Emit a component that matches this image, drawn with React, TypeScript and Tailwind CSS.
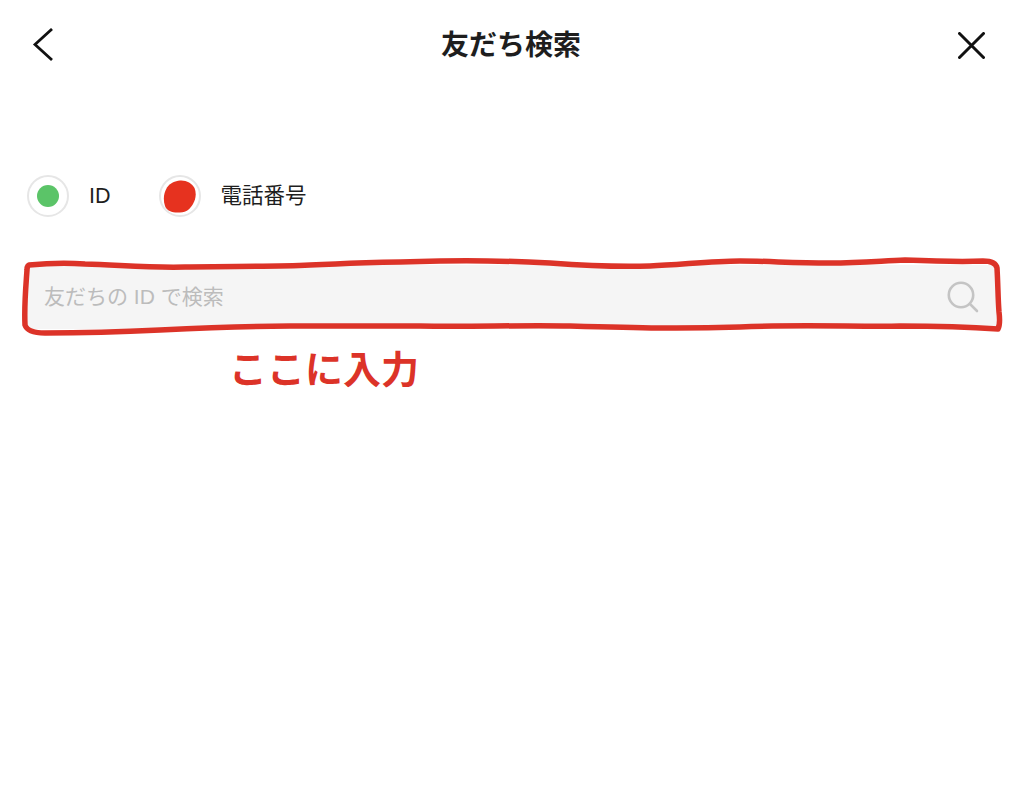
const sans = "font-['Liberation_Sans','Noto_Sans_CJK_JP',sans-serif]";

function Radio({ label, children }: { label: string; children: React.ReactNode }) {
  return (
    <div className="flex items-center gap-5">
      <div className="relative w-[42px] h-[42px] rounded-full border-2 border-[#e6e6e6] flex items-center justify-center">
        {children}
      </div>
      <span className="text-[21.5px] leading-[30px] text-[#1e1e1e]">{label}</span>
    </div>
  );
}

export default function App() {
  return (
    <div className={`${sans} w-[1024px] h-[786px] bg-white overflow-hidden`}>
      <header className="h-[90px] grid grid-cols-[1fr_auto_1fr] items-center pl-[32px] pr-[39px]">
        <svg width="22" height="34" viewBox="0 0 22 34" fill="none" stroke="#111" strokeWidth="2.8">
          <path d="M20 1 L3 16.5 L20 32" />
        </svg>
        <h1 className="text-[28px] leading-[40px] pt-[2px] pl-[5px] font-bold text-[#1e1e1e]">友だち検索</h1>
        <svg
          className="justify-self-end"
          width="27"
          height="27"
          viewBox="0 0 27 27"
          fill="none"
          stroke="#111"
          strokeWidth="3"
          strokeLinecap="round"
        >
          <path d="M1.5 1.5 L25.5 25.5 M25.5 1.5 L1.5 25.5" />
        </svg>
      </header>

      <div className="flex items-center gap-[48px] pl-[27px] mt-[85px]">
        <Radio label="ID">
          <div className="w-[22px] h-[22px] rounded-full bg-[#5bc468]" />
        </Radio>
        <Radio label="電話番号">
          <svg width="33" height="33" viewBox="0 0 33 33" className="shrink-0">
            <path
              d="M17 0.5 C23 0 29 3 31.5 8 C33.5 13 33 19 30 24 C27 29 24 32 17 32.5 C10 33 4 31.5 2 26 C0 20 0.5 13 4 7.5 C7 3 12 1 17 0.5 Z"
              fill="#e6321f"
            />
          </svg>
        </Radio>
      </div>

      <div className="relative mt-[48px] mx-[24px] h-[64px] bg-[#f5f5f5] flex items-center justify-between pl-[20px] pr-[21px]">
        <span className="text-[21px] leading-[28px] text-[#bcbcbc]">友だちの ID で検索</span>
        <svg width="32" height="32" viewBox="0 0 32 32" fill="none" stroke="#c4c4c4" strokeWidth="2.6" strokeLinecap="round">
          <circle cx="14" cy="14" r="12.2" />
          <path d="M23 23 L30 30" />
        </svg>
        {/* hand drawn red marker round the field */}
        <svg
          className="absolute left-[-24px] top-[-25px] pointer-events-none"
          width="1024"
          height="110"
          viewBox="0 240 1024 110"
          fill="none"
          stroke="#dc3328"
          strokeWidth="5.5"
          strokeLinejoin="round"
          strokeLinecap="round"
        >
          <path d="M29 265 C50 263 70 263 85 264 C120 265 150 268 185 267 C230 266 270 267 310 265 C350 263 390 262 440 261 C480 260 510 261 550 263 C590 266 620 267 650 266 C680 265 710 261 740 261 C770 261 790 263 830 263 C860 263 880 261 905 260 C930 261 960 262 983 261 C990 261 996 263 997 268 C998 285 998 300 999 312 C1000 320 1000 325 998 329 C970 327 940 326 900 326 C860 327 800 324 740 327 C680 329 640 328 570 326 C520 325 470 327 420 326 C370 326 330 326 290 326 C240 326 200 328 160 330 C120 332 80 333 45 333 C35 333 27 331 25 325 C24 305 26 285 27 270 C27 267 28 265 30 265" />
        </svg>
      </div>

      <div className="mt-[14px] pl-[229px] text-[38px] leading-[48px] font-bold text-[#dc3328] font-['Noto_Sans_CJK_JP',sans-serif]">
        ここに入力
      </div>
    </div>
  );
}
